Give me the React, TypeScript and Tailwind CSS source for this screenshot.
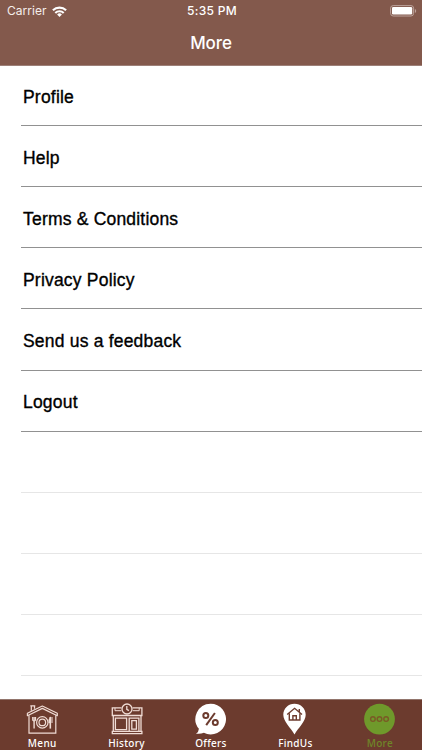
import type { ReactNode } from "react";

const menuItems = [
  "Profile",
  "Help",
  "Terms & Conditions",
  "Privacy Policy",
  "Send us a feedback",
  "Logout",
];

function WifiIcon() {
  return (
    <svg width="15" height="11" viewBox="0 0 15 11" fill="none" stroke="#fff" strokeWidth="2.1">
      <path d="M0.9 4.3a9.4 9.4 0 0 1 13.2 0" />
      <path d="M3.3 6.9a6 6 0 0 1 8.4 0" />
      <path d="M5.1 8.5a3.4 3.4 0 0 1 4.8 0L7.5 11z" fill="#fff" stroke="none" />
    </svg>
  );
}

function BatteryIcon() {
  return (
    <svg width="27" height="12" viewBox="0 0 27 12" fill="none">
      <rect x="0.6" y="0.6" width="23" height="10.4" rx="2.6" stroke="#bda39b" strokeWidth="1" />
      <rect x="2" y="2" width="20.2" height="7.6" rx="1.3" fill="#fff" />
      <path d="M24.9 4v4c1.7-.7 1.7-3.3 0-4z" fill="#bda39b" />
    </svg>
  );
}

function MenuIcon() {
  return (
    <svg width="36" height="34" viewBox="24 702 36 34" fill="none" stroke="#f0dcd5" strokeWidth="1.2">
      <path d="M31.3 710.8v-5h3.2v3M30.3 705.8h5" />
      <path d="M27.4 713.2L42.3 706l15 7.2v2.5l-15-7.3-14.9 7.3z" strokeLinejoin="round" />
      <path d="M29 715.3v17.9h26.8v-17.9" />
      <circle cx="42.3" cy="722.4" r="5.7" />
      <circle cx="42.3" cy="722.4" r="3.3" />
      <path d="M32.7 716.9v3.3q1.4 1.6 2.8 0v-3.3" />
      <path d="M34.1 717v11.6" strokeWidth="1.4" />
      <path d="M50.3 717v11.6" strokeWidth="1.6" />
      <path d="M50.4 716.8q-2.3 2.7-1.6 6.2h1.6z" fill="#f0dcd5" strokeWidth="0.4" />
      <path d="M52 717v6" strokeWidth="1" />
    </svg>
  );
}

function HistoryIcon() {
  return (
    <svg width="36" height="34" viewBox="108.5 702 36 34" fill="none" stroke="#f0dcd5" strokeWidth="1.3">
      <path d="M121 707.9h-9.2v7.6h29.6v-7.6H132" />
      <path d="M114.5 707.9v2.8h6.3M138.7 707.9v2.8h-6.5" strokeWidth="1" />
      <circle cx="126.5" cy="709" r="5" />
      <path d="M126.3 706v3.4l2.1 1.2" />
      <path d="M112.8 715.5v16M140.5 715.5v16M111.8 731.3h29.6v2.3h-29.6z" />
      <path d="M114.9 718.2h11.2v11.5h-11.2zM128.7 731.3v-13.1h9.7v13.1M131.3 720.7h4.6v8.4h-4.6z" />
    </svg>
  );
}

function OffersIcon() {
  return (
    <svg width="36" height="34" viewBox="193 702 36 34" fill="none">
      <path d="M210.6 703.8a15.3 15.3 0 1 1-6.7 29q-3.4 1.5-7.9.9 2.7-1.5 2.9-4.9a15.3 15.3 0 0 1 11.7-25z" fill="#fff" />
      <g stroke="#6c3b2e" strokeWidth="2">
        <circle cx="205.8" cy="715.6" r="2.5" />
        <circle cx="215.3" cy="722.6" r="2.5" />
        <path d="M214.9 713l-8.7 12.2" />
      </g>
    </svg>
  );
}

function FindUsIcon() {
  return (
    <svg width="36" height="34" viewBox="277.3 702 36 34" fill="none">
      <path d="M294.8 703.8c6.3 0 11.2 4.9 11.2 11 0 6.6-7.6 13.4-11.2 19.6-3.6-6.2-11.2-13-11.2-19.6 0-6.1 4.9-11 11.2-11z" fill="#fff" />
      <g stroke="#6c3b2e" strokeWidth="1.4">
        <path d="M287.5 714.5l7.4-6.2 7.4 6.2M299.6 712v-3" />
        <path d="M289.6 713.2v6.8h10.6v-6.8M293.2 720v-4.3h3.4v4.3" />
      </g>
    </svg>
  );
}

function MoreIcon() {
  return (
    <svg width="36" height="34" viewBox="361.8 702 36 34" fill="none">
      <circle cx="379.3" cy="719.1" r="15.4" fill="#6f992b" />
      <g stroke="#7a5a25" strokeWidth="1.4">
        <circle cx="372.7" cy="719.1" r="2.3" />
        <circle cx="379.3" cy="719.1" r="2.3" />
        <circle cx="385.9" cy="719.1" r="2.3" />
      </g>
    </svg>
  );
}

const tabs: { label: string; icon: ReactNode; active?: boolean }[] = [
  { label: "Menu", icon: <MenuIcon /> },
  { label: "History", icon: <HistoryIcon /> },
  { label: "Offers", icon: <OffersIcon /> },
  { label: "FindUs", icon: <FindUsIcon /> },
  { label: "More", icon: <MoreIcon />, active: true },
];

function Header() {
  return (
    <header className="h-[66px] shrink-0 border-b border-[#9d8078] bg-[#83594c] font-[Inter,sans-serif] text-white">
      <div className="grid h-[22px] grid-cols-3 items-center pr-[5px] pl-[7px]">
        <div className="flex items-center gap-[5px]">
          <span className="text-[12px] tracking-[0.05px] text-[#f5eeeb]">Carrier</span>
          <WifiIcon />
        </div>
        <span className="text-center text-[12px] font-medium tracking-[0.3px]">5:35 PM</span>
        <div className="flex justify-end">
          <BatteryIcon />
        </div>
      </div>
      <h1 className="mt-[9px] text-center text-[17px] leading-6 font-medium tracking-[-0.1px]">More</h1>
    </header>
  );
}

export default function App() {
  return (
    <div className="flex h-[750px] w-[422px] flex-col overflow-hidden bg-white">
      <Header />
      <main className="min-h-0 flex-1 overflow-hidden pl-[21px]">
        <div className="-mt-[0.9px]">
          {menuItems.map((item) => (
            <div
              key={item}
              className="flex h-[61.1px] items-center border-b border-[#919191] pt-[3px] pl-[2px] font-['Liberation_Sans',Arial,sans-serif] text-[17.5px] tracking-[0.2px] text-black [-webkit-text-stroke:0.35px_black]"
            >
              {item}
            </div>
          ))}
          {[0, 1, 2, 3].map((row) => (
            <div key={row} className="h-[61.1px] border-b border-[#e6e6e6]" />
          ))}
        </div>
      </main>
      <nav className="grid h-[51px] shrink-0 grid-cols-5 border-t border-[#92756c] bg-[#6c3b2e]">
        {tabs.map((tab) => (
          <div key={tab.label} className="flex flex-col items-center pt-[2px]">
            {tab.icon}
            <span
              className={`font-['Noto_Sans',sans-serif] text-[10px] leading-[14px] font-medium tracking-[0.3px] ${tab.active ? "text-[#6f8728]" : "text-white"}`}
            >
              {tab.label}
            </span>
          </div>
        ))}
      </nav>
    </div>
  );
}
